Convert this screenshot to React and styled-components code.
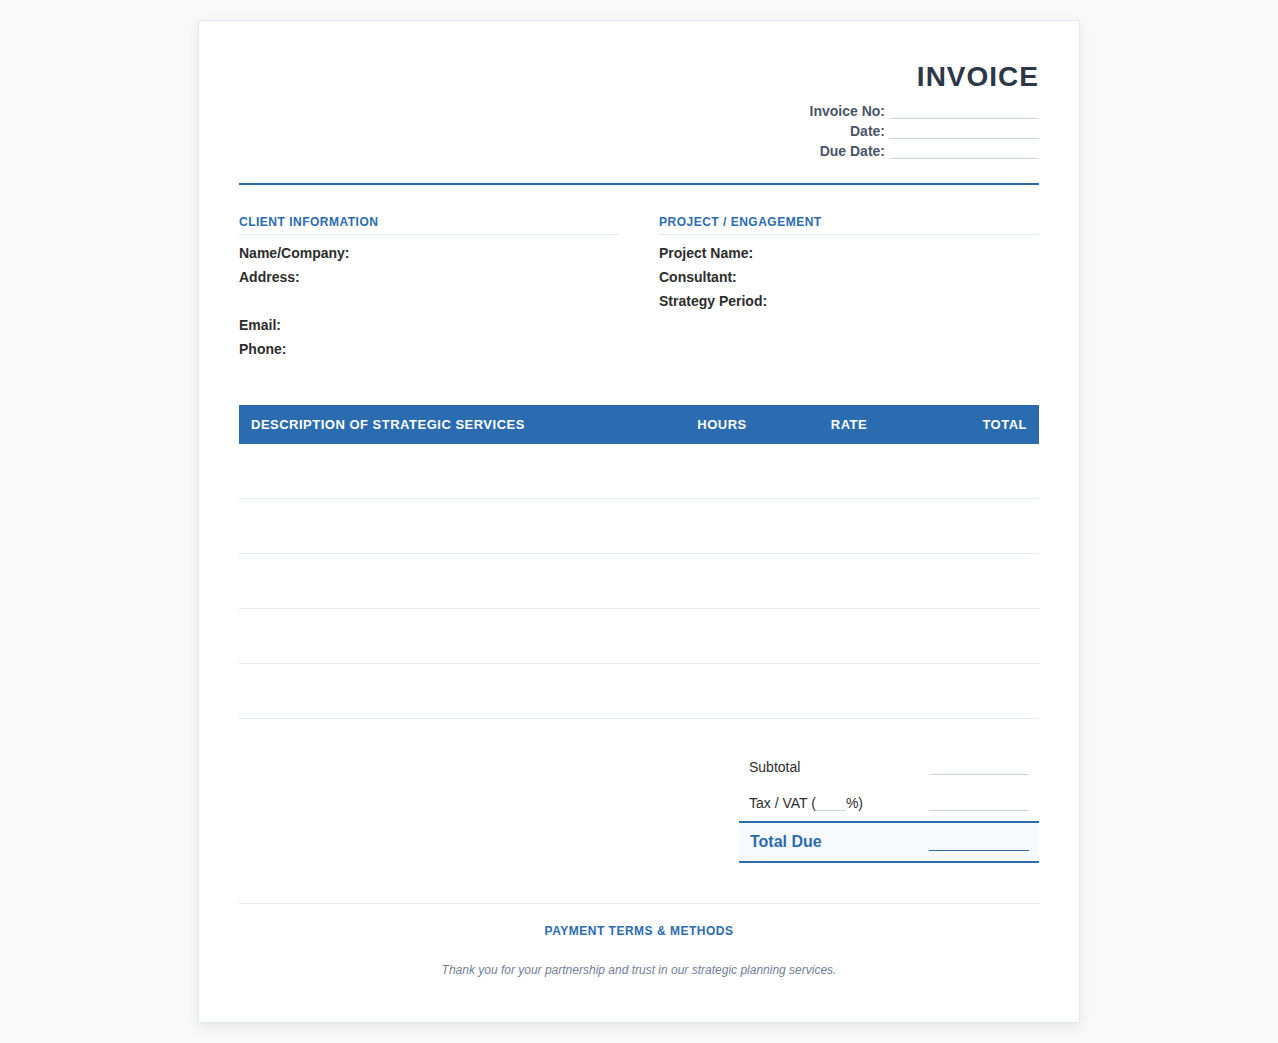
import styled, { createGlobalStyle } from "styled-components"

const GlobalStyle = createGlobalStyle`
  * { box-sizing: border-box; }
  body {
    margin: 0;
    background: #f9f9f9;
    font-family: "Liberation Sans", Arial, sans-serif;
    color: #2d2d2d;
  }
`

const Page = styled.div`
  padding: 20px 0;
  display: flex;
  justify-content: center;
`

const Sheet = styled.div`
  width: 882px;
  height: 1003px;
  padding: 40px;
  background: #fff;
  border: 1px solid #e2e8f0;
  box-shadow: 0 4px 12px rgba(0, 0, 0, .08);
`

const Header = styled.header`
  height: 124px;
  border-bottom: 2px solid #2b6cb0;
  display: flex;
  flex-direction: column;
  align-items: flex-end;
`

const Title = styled.h1`
  margin: 0 0 6px;
  font-size: 28px;
  line-height: 32px;
  font-weight: 700;
  letter-spacing: 1px;
  color: #2d3748;
`

const MetaRow = styled.div`
  display: flex;
  align-items: flex-end;
  gap: 4px;
  height: 20px;
  font-size: 14px;
  line-height: 16px;
  font-weight: 700;
  color: #4a5568;
`

const MetaLine = styled.span`
  width: 150px;
  height: 100%;
  border-bottom: 1px solid #cbd5e0;
`

const InfoGrid = styled.section`
  display: grid;
  grid-template-columns: 380px 380px;
  gap: 40px;
  margin-top: 30px;
  height: 190px;
`

const SectionTitle = styled.h3`
  margin: 0 0 6px;
  padding-bottom: 5px;
  border-bottom: 1px solid #e2e8f0;
  font-size: 12px;
  line-height: 14px;
  font-weight: 700;
  letter-spacing: .5px;
  text-transform: uppercase;
  color: #2b6cb0;
`

const InfoRow = styled.div`
  height: 24px;
  margin-bottom: ${({ $gap }) => ($gap ? "24px" : "0")};
  font-size: 14px;
  line-height: 24px;
  font-weight: 700;
  color: #2d2d2d;
`

const Table = styled.table`
  width: 800px;
  table-layout: fixed;
  border-collapse: separate;
  border-spacing: 0;
`

const Th = styled.th`
  width: ${({ $w }) => $w}px;
  height: 39px;
  padding: 0 12px;
  background: #2b6cb0;
  color: #fff;
  font-size: 13px;
  font-weight: 700;
  letter-spacing: .5px;
  text-transform: uppercase;
  text-align: ${({ $align }) => $align || "left"};
`

const Td = styled.td`
  height: 55px;
  padding: 0;
  border-bottom: 1px solid #e2e8f0;
`

const Totals = styled.div`
  width: 300px;
  margin: 20px 0 0 auto;
`

const TotalRow = styled.div`
  display: flex;
  justify-content: space-between;
  align-items: flex-end;
  height: 36px;
  padding: 0 10px;
  font-size: 14px;
  line-height: 16px;
  color: #2d2d2d;
`

const Amount = styled.span`
  display: block;
  width: 100px;
  height: 16px;
  margin-top: ${({ $strong }) => ($strong ? "2px" : "0")};
  border-bottom: 1px solid ${({ $strong }) => ($strong ? "#2b6cb0" : "#cbd5e0")};
`

const TaxBlank = styled.span`
  display: inline-block;
  width: 30px;
  height: 15px;
  vertical-align: bottom;
  border-bottom: 1px solid #cbd5e0;
`

const GrandTotal = styled.div`
  display: flex;
  justify-content: space-between;
  align-items: center;
  height: 42px;
  margin-top: 10px;
  padding: 0 10px 0 11px;
  background: #f7fafc;
  border-top: 2px solid #2b6cb0;
  border-bottom: 2px solid #2b6cb0;
  font-size: 16px;
  font-weight: 700;
  color: #2b6cb0;
`

const Footer = styled.footer`
  margin-top: 40px;
  padding-top: 20px;
  border-top: 1px solid #e2e8f0;
  text-align: center;
`

const FooterTitle = styled.div`
  font-size: 12px;
  line-height: 14px;
  font-weight: 700;
  letter-spacing: .5px;
  text-transform: uppercase;
  color: #2b6cb0;
`

const Thanks = styled.p`
  margin: 25px 0 0;
  font-size: 12px;
  line-height: 14px;
  font-style: italic;
  color: #718096;
`

const rows = [0, 1, 2, 3, 4]

const App = () => (
  <Page>
    <GlobalStyle />
    <Sheet>
      <Header>
        <Title>INVOICE</Title>
        <MetaRow>Invoice No:<MetaLine /></MetaRow>
        <MetaRow>Date:<MetaLine /></MetaRow>
        <MetaRow>Due Date:<MetaLine /></MetaRow>
      </Header>
      <InfoGrid>
        <div>
          <SectionTitle>Client Information</SectionTitle>
          <InfoRow>Name/Company:</InfoRow>
          <InfoRow $gap>Address:</InfoRow>
          <InfoRow>Email:</InfoRow>
          <InfoRow>Phone:</InfoRow>
        </div>
        <div>
          <SectionTitle>Project / Engagement</SectionTitle>
          <InfoRow>Project Name:</InfoRow>
          <InfoRow>Consultant:</InfoRow>
          <InfoRow>Strategy Period:</InfoRow>
        </div>
      </InfoGrid>
      <Table>
        <thead>
          <tr>
            <Th $w={420}>Description of Strategic Services</Th>
            <Th $w={126} $align="center">Hours</Th>
            <Th $w={128} $align="center">Rate</Th>
            <Th $w={126} $align="right">Total</Th>
          </tr>
        </thead>
        <tbody>
          {rows.map((r) => (
            <tr key={r}>
              <Td /><Td /><Td /><Td />
            </tr>
          ))}
        </tbody>
      </Table>
      <Totals>
        <TotalRow><span>Subtotal</span><Amount /></TotalRow>
        <TotalRow><span>Tax / VAT (<TaxBlank />%)</span><Amount /></TotalRow>
        <GrandTotal><span>Total Due</span><Amount $strong /></GrandTotal>
      </Totals>
      <Footer>
        <FooterTitle>Payment Terms &amp; Methods</FooterTitle>
        <Thanks>Thank you for your partnership and trust in our strategic planning services.</Thanks>
      </Footer>
    </Sheet>
  </Page>
)

export default App
